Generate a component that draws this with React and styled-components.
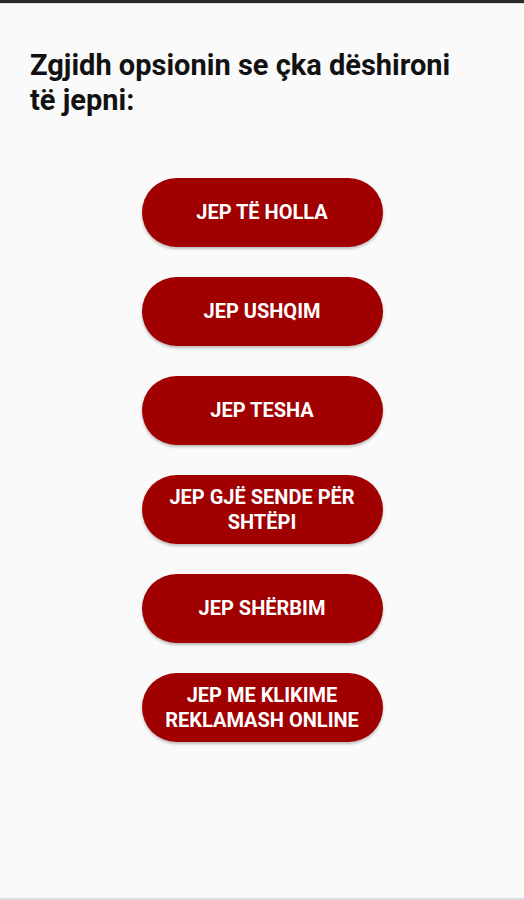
import styled, { createGlobalStyle } from "styled-components";

const GlobalStyle = createGlobalStyle`
    html, body {
        margin: 0;
        padding: 0;
        background: #fafafa;
    }
    * {
        box-sizing: border-box;
    }
`;

const options = [
    "JEP TË HOLLA",
    "JEP USHQIM",
    "JEP TESHA",
    "JEP GJË SENDE PËR SHTËPI",
    "JEP SHËRBIM",
    "JEP ME KLIKIME REKLAMASH ONLINE",
];

export default function App() {
    return (
        <>
            <GlobalStyle />
            <Screen>
                <StatusEdge />
                <Content>
                    <Title>Zgjidh opsionin se çka dëshironi të jepni:</Title>
                    <Options>
                        {options.map(label => (
                            <OptionButton key={label}>{label}</OptionButton>
                        ))}
                    </Options>
                </Content>
                <BottomEdge />
            </Screen>
        </>
    );
}

const Screen = styled.div`
    width: 524px;
    height: 900px;
    display: flex;
    flex-direction: column;
    background: #fafafa;
    font-family: Roboto, "Liberation Sans", sans-serif;
`

const StatusEdge = styled.div`
    height: 4px;
    background: #2b2b2b;
    border-bottom: 1px solid #e0e0e0;
`

const BottomEdge = styled.div`
    height: 2px;
    background: #dcdcdc;
`

const Content = styled.div`
    flex: 1;
    padding: 44px 30px 0;
    display: flex;
    flex-direction: column;
`

const Title = styled.h1`
    margin: 0;
    width: 432px;
    font-size: 29px;
    line-height: 35px;
    font-weight: 700;
    color: #111;
`

const Options = styled.div`
    margin-top: 60px;
    display: flex;
    flex-direction: column;
    align-items: center;
    gap: 30px;
`

const OptionButton = styled.button`
    width: 241px;
    height: 69px;
    border: none;
    border-radius: 35px;
    background: #a00000;
    color: #fff;
    font-family: Roboto, "Liberation Sans", sans-serif;
    font-size: 20px;
    font-weight: 700;
    line-height: 25px;
    padding: 0 16px;
    text-align: center;
    box-shadow: 0 2px 3px rgba(0, 0, 0, 0.25);
    cursor: pointer;
`
